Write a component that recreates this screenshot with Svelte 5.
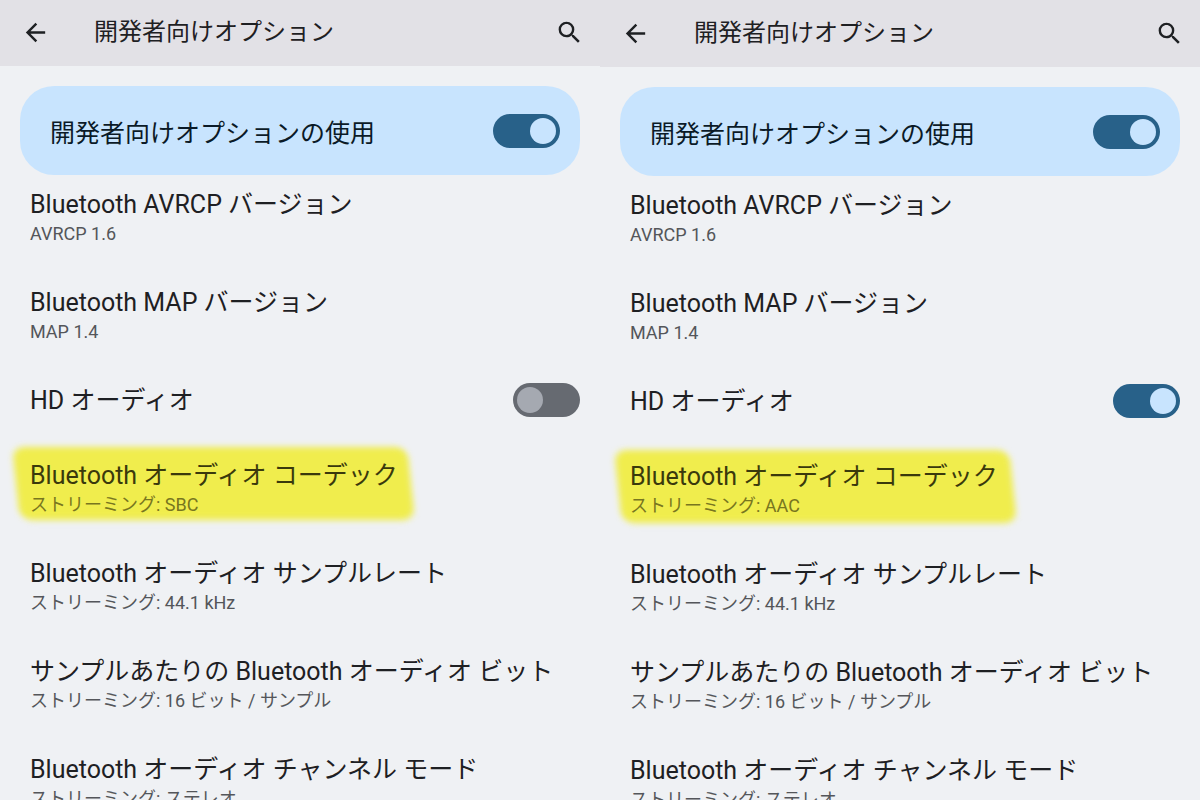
<script lang="ts">
  type Option = { title: string; summary?: string; toggle?: boolean; marked?: boolean }

  function options(hdAudio: boolean, codec: string): Option[] {
    return [
      { title: 'Bluetooth AVRCP バージョン', summary: 'AVRCP 1.6' },
      { title: 'Bluetooth MAP バージョン', summary: 'MAP 1.4' },
      { title: 'HD オーディオ', toggle: hdAudio },
      { title: 'Bluetooth オーディオ コーデック', summary: `ストリーミング: ${codec}`, marked: true },
      { title: 'Bluetooth オーディオ サンプルレート', summary: 'ストリーミング: 44.1 kHz' },
      { title: 'サンプルあたりの Bluetooth オーディオ ビット', summary: 'ストリーミング: 16 ビット / サンプル' },
      { title: 'Bluetooth オーディオ チャンネル モード', summary: 'ストリーミング: ステレオ' },
    ]
  }

  let screens = $state([
    { name: 'sbc', enabled: true, options: options(false, 'SBC') },
    { name: 'aac', enabled: true, options: options(true, 'AAC') },
  ])
</script>

<main>
  {#each screens as screen (screen.name)}
    <section class={screen.name}>
      <header>
        <button type="button" aria-label="戻る">
          <svg viewBox="0 0 24 24"><path d="M20 11H7.83l5.59-5.59L12 4l-8 8 8 8 1.41-1.41L7.83 13H20z" /></svg>
        </button>
        <h1>開発者向けオプション</h1>
        <button type="button" aria-label="検索">
          <svg viewBox="0 0 24 24"><path d="M15.5 14h-.79l-.28-.27A6.47 6.47 0 0 0 16 9.5 6.5 6.5 0 1 0 9.5 16c1.61 0 3.09-.59 4.23-1.57l.27.28v.79l5 4.99L20.49 19zm-6 0C7.01 14 5 11.99 5 9.5S7.01 5 9.5 5 14 7.01 14 9.5 11.99 14 9.5 14z" /></svg>
        </button>
      </header>
      <label class="master">
        <span>開発者向けオプションの使用</span>
        <input type="checkbox" role="switch" bind:checked={screen.enabled} />
      </label>
      <ul>
        {#each screen.options as option}
          <li>
            {#if option.toggle !== undefined}
              <label class="row">
                <span>{option.title}</span>
                <input type="checkbox" role="switch" bind:checked={option.toggle} />
              </label>
            {:else}
              <a href="#{screen.name}" class:marked={option.marked}>
                <h2>{option.title}</h2>
                <p>{option.summary}</p>
              </a>
            {/if}
          </li>
        {/each}
      </ul>
    </section>
  {/each}
</main>

<style>
  :global(body) {
    margin: 0;
    background: #eff1f4;
  }
  main {
    display: grid;
    grid-template-columns: repeat(2, minmax(0, 1fr));
    height: 100vh;
    overflow: hidden;
    background: #eff1f4;
    color: #1e2023;
    font-family: Roboto, "Noto Sans CJK JP", sans-serif;
  }
  section {
    min-width: 0;
    overflow: hidden;
  }
  header {
    display: flex;
    align-items: center;
    height: 66px;
    padding: 0 16px 2px 21px;
    box-sizing: border-box;
    background: #e2e1e6;
  }
  .aac header {
    height: 67px;
    padding-bottom: 1px;
  }
  button {
    display: flex;
    padding: 0;
    border: 0;
    background: none;
    color: inherit;
  }
  svg {
    width: 29px;
    height: 29px;
    fill: currentColor;
  }
  h1 {
    flex: 1;
    margin: 0 0 0 44px;
    font-size: 24px;
    font-weight: 400;
    line-height: 36px;
  }
  .master {
    display: flex;
    align-items: center;
    justify-content: space-between;
    height: 89px;
    margin: 20px 20px 0;
    padding: 0 20px 0 30px;
    box-sizing: border-box;
    border-radius: 34px;
    background: #c8e4fe;
    color: #0b1a27;
    font-size: 25px;
  }
  ul {
    margin: 0;
    padding: 12px 20px 0 30px;
    list-style: none;
  }
  li {
    height: 98px;
  }
  li:has(.row) {
    height: 75px;
  }
  a {
    position: relative;
    display: block;
    color: inherit;
    text-decoration: none;
    white-space: nowrap;
  }
  h2,
  .row {
    margin: 0;
    font-size: 25px;
    font-weight: 400;
    line-height: 36px;
  }
  .row {
    display: flex;
    align-items: flex-start;
    justify-content: space-between;
  }
  p {
    margin: 0;
    color: #54565a;
    font-size: 18px;
    line-height: 21px;
  }
  .marked {
    z-index: 0;
    color: #3a390c;
  }
  .marked p {
    color: #78761f;
  }
  .marked::before {
    content: "";
    position: absolute;
    z-index: -1;
    top: -11px;
    left: -14px;
    width: 395px;
    height: 73px;
    border-radius: 12px;
    background: #f0ed4d;
    filter: blur(3px);
    transform: skewX(6deg);
  }
  .aac .marked::before {
    top: -9px;
    left: -12px;
  }
  input {
    position: relative;
    flex: none;
    appearance: none;
    width: 67px;
    height: 34px;
    margin: 0;
    border-radius: 17px;
    background: #666a71;
  }
  input::before {
    content: "";
    position: absolute;
    top: 4px;
    left: 4px;
    width: 26px;
    height: 26px;
    border-radius: 50%;
    background: #a5a9b1;
  }
  input:checked {
    background: #286189;
  }
  input:checked::before {
    left: 37px;
    background: #c8e4fe;
  }
</style>
